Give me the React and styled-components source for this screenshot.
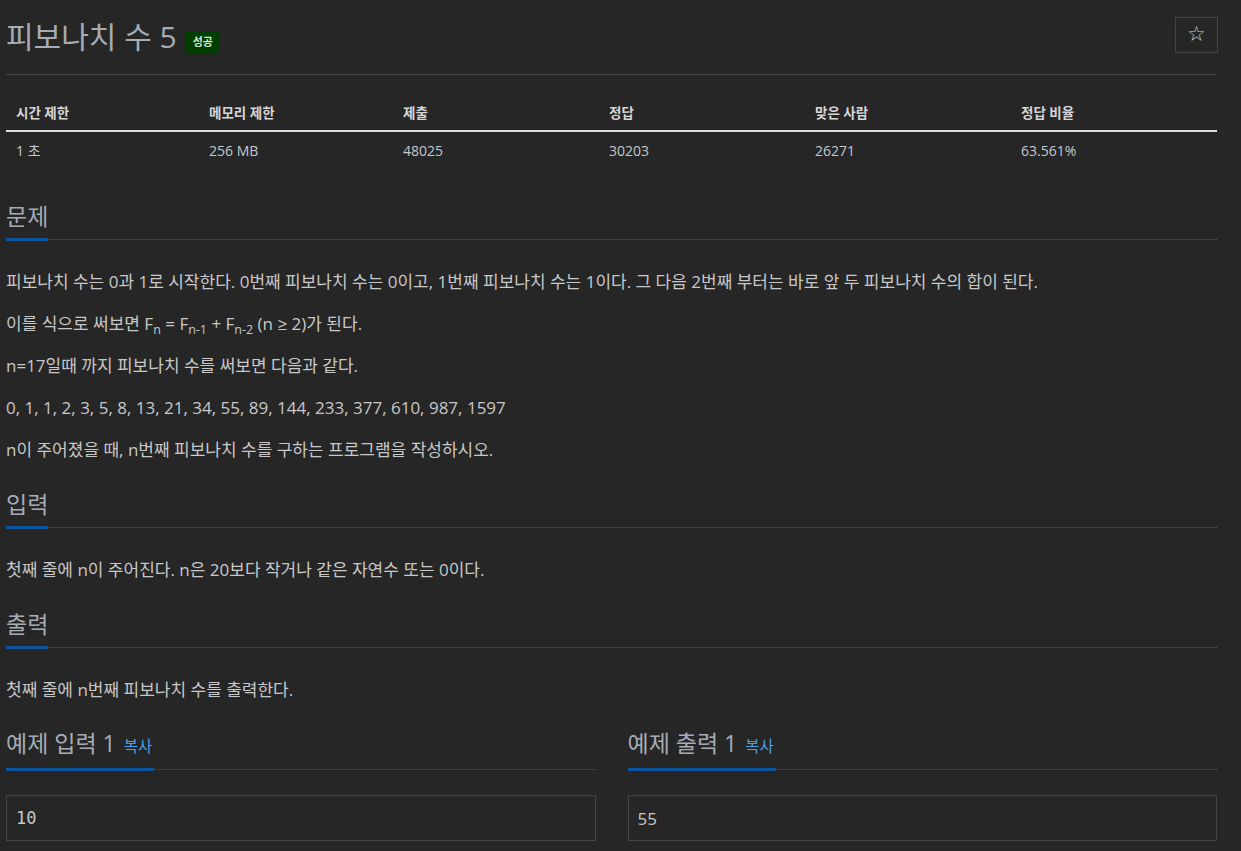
import React from "react";
import styled, { createGlobalStyle } from "styled-components";

const Global = createGlobalStyle`
  html, body { margin: 0; padding: 0; background: #262626; }
  body { font-family: "Open Sans", "Noto Sans CJK KR", sans-serif; color: #c8c8c8; }
  * { box-sizing: border-box; }
`;

const Page = styled.div`
  padding: 0 24px 0 6px;
  width: 1241px;
`;

const TitleBar = styled.div`
  display: flex;
  justify-content: space-between;
  align-items: flex-start;
  padding-top: 17px;
  height: 75px;
  border-bottom: 1px solid #444;
`;

const Title = styled.h1`
  margin: 0;
  padding-top: 1px;
  font-size: 30px;
  font-weight: 400;
  color: #a5acb6;
  display: flex;
  align-items: center;
  gap: 8px;
  line-height: 38px;
`;

const Badge = styled.span`
  background: #003d00;
  color: #cfe8cf;
  font-size: 11px;
  font-weight: 600;
  padding: 3px 7px 3px 8px;
  line-height: 16px;
  margin-top: 9px;
`;

const StarButton = styled.button`
  width: 43px;
  height: 36px;
  margin-right: -1px;
  background: transparent;
  border: 1px solid #444;
  color: #c8cdd4;
  font-size: 21px;
  line-height: 1;
  font-family: "DejaVu Sans", sans-serif;
  display: flex;
  align-items: center;
  justify-content: center;
  padding: 0 0 2px 0;
`;

const Table = styled.table`
  width: 100%;
  border-collapse: collapse;
  margin-top: 19px;
  table-layout: fixed;
`;

const Th = styled.th`
  text-align: left;
  font-weight: 700;
  font-size: 13.5px;
  color: #d6d6d6;
  padding: 0 10px;
  height: 37px;
  border-bottom: 2px solid #dcdcdc;
  width: ${(p) => p.$w}px;
`;

const Td = styled.td`
  color: #c3c8cf;
  font-size: 14px;
  padding: 0 10px;
  height: 37px;
`;

const Section = styled.section`
  margin-top: ${(p) => p.$mt ?? 24}px;
`;

const Headline = styled.div`
  display: flex;
  border-bottom: 1px dotted #555;
  margin-bottom: ${(p) => p.$mb ?? 28}px;
`;

const HeadTitle = styled.h2`
  margin: 0 0 -2px 0;
  font-size: 23px;
  font-weight: 400;
  color: #a5acb6;
  line-height: 36px;
  padding-bottom: 4px;
  border-bottom: 3px solid #0b55a0;
  display: flex;
  align-items: baseline;
  gap: 8px;
  white-space: nowrap;
`;

const CopyLink = styled.span`
  font-size: 15.5px;
  color: #4a9ee8;
  padding-right: 2px;
`;

const Para = styled.p`
  margin: 0 0 18px 0;
  font-size: 17px;
  line-height: 24px;
  color: #c8c8c8;
  sub { font-size: 12.5px; vertical-align: -4px; line-height: 0; }
`;

const Samples = styled.div`
  display: grid;
  grid-template-columns: 1fr 1fr;
  gap: 32px;
  margin-top: 23px;
`;

const SampleBox = styled.pre`
  margin: 0;
  border: 1px solid #444;
  height: 46px;
  padding: 0 9px;
  display: flex;
  align-items: center;
  font-size: 17px;
  color: #c8c8c8;
  font-family: ${(p) => (p.$mono ? `"DejaVu Sans Mono", monospace` : `"Open Sans", sans-serif`)};
`;

const cols = [193, 194, 206, 206, 206, 206];
const heads = ["시간 제한", "메모리 제한", "제출", "정답", "맞은 사람", "정답 비율"];
const vals = ["1 초", "256 MB", "48025", "30203", "26271", "63.561%"];

export default function App() {
  return (
    <Page>
      <Global />
      <TitleBar>
        <Title>
          피보나치 수 5 <Badge>성공</Badge>
        </Title>
        <StarButton>☆</StarButton>
      </TitleBar>
      <Table>
        <thead>
          <tr>
            {heads.map((h, i) => (
              <Th key={h} $w={cols[i]}>{h}</Th>
            ))}
          </tr>
        </thead>
        <tbody>
          <tr>
            {vals.map((v) => (
              <Td key={v}>{v}</Td>
            ))}
          </tr>
        </tbody>
      </Table>

      <Section $mt={30}>
        <Headline $mb={30}><HeadTitle>문제</HeadTitle></Headline>
        <Para>피보나치 수는 0과 1로 시작한다. 0번째 피보나치 수는 0이고, 1번째 피보나치 수는 1이다. 그 다음 2번째 부터는 바로 앞 두 피보나치 수의 합이 된다.</Para>
        <Para>이를 식으로 써보면 F<sub>n</sub> = F<sub>n-1</sub> + F<sub>n-2</sub> (n ≥ 2)가 된다.</Para>
        <Para>n=17일때 까지 피보나치 수를 써보면 다음과 같다.</Para>
        <Para>0, 1, 1, 2, 3, 5, 8, 13, 21, 34, 55, 89, 144, 233, 377, 610, 987, 1597</Para>
        <Para>n이 주어졌을 때, n번째 피보나치 수를 구하는 프로그램을 작성하시오.</Para>
      </Section>

      <Section>
        <Headline $mb={30}><HeadTitle>입력</HeadTitle></Headline>
        <Para>첫째 줄에 n이 주어진다. n은 20보다 작거나 같은 자연수 또는 0이다.</Para>
      </Section>

      <Section>
        <Headline $mb={30}><HeadTitle>출력</HeadTitle></Headline>
        <Para>첫째 줄에 n번째 피보나치 수를 출력한다.</Para>
      </Section>

      <Samples>
        <div>
          <Headline $mb={25}><HeadTitle>예제 입력 1 <CopyLink>복사</CopyLink></HeadTitle></Headline>
          <SampleBox $mono>10</SampleBox>
        </div>
        <div>
          <Headline $mb={25}><HeadTitle>예제 출력 1 <CopyLink>복사</CopyLink></HeadTitle></Headline>
          <SampleBox>55</SampleBox>
        </div>
      </Samples>
    </Page>
  );
}
